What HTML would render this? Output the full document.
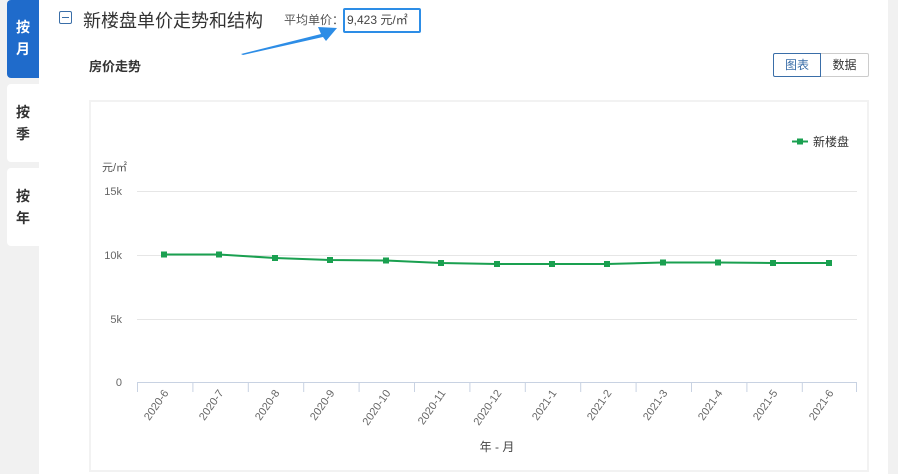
<!DOCTYPE html>
<html><head><meta charset="utf-8"><style>
body{margin:0;width:898px;height:474px;background:#f1f1f1;font-family:"Liberation Sans","Noto Sans CJK SC",sans-serif;position:relative;overflow:hidden}
.main{position:absolute;left:39px;top:0;width:849px;height:474px;background:#fff}
.tab{position:absolute;left:7px;width:32px;background:#fff;border-radius:4px 0 0 4px;font-size:14px;font-weight:bold;color:#333;text-align:center;line-height:22px}
.t{position:absolute;white-space:nowrap}
</style></head><body>
<div class="main"></div>
<div class="tab" style="top:0;height:78px;background:#1f6bcb;color:#fff;padding-top:16px;box-sizing:border-box">按<br>月</div>
<div class="tab" style="top:84px;height:78px;padding-top:17px;box-sizing:border-box">按<br>季</div>
<div class="tab" style="top:168px;height:78px;padding-top:17px;box-sizing:border-box">按<br>年</div>
<div style="position:absolute;left:59px;top:11px;width:13px;height:13px;border:1.5px solid #3a6ea8;border-radius:2px;box-sizing:border-box"><div style="position:absolute;left:2px;right:2px;top:4.5px;height:1.5px;background:#3a6ea8"></div></div>
<div class="t" style="left:83px;top:7px;font-size:18px;color:#333">新楼盘单价走势和结构</div>
<div class="t" style="left:284px;top:11px;font-size:12px;color:#555">平均单价：</div>
<div style="position:absolute;left:343px;top:8px;width:78px;height:25px;border:2px solid #2d8de6;border-radius:2px;box-sizing:border-box"></div>
<div class="t" style="left:347px;top:11px;font-size:12px;color:#444">9,423 元/㎡</div>
<svg style="position:absolute;left:0;top:0" width="898" height="474">
<polygon points="241,54 321,34 318,27 337,28 326,41 323,37 243,55" fill="#2d8de6"/>
</svg>
<div class="t" style="left:89px;top:56px;font-size:13px;font-weight:bold;color:#333">房价走势</div>
<div style="position:absolute;left:773px;top:53px;width:48px;height:24px;border:1px solid #3a6ea8;border-radius:2px 0 0 2px;box-sizing:border-box;font-size:12px;color:#3a6ea8;text-align:center;line-height:22px">图表</div>
<div style="position:absolute;left:821px;top:53px;width:48px;height:24px;border:1px solid #ccc;border-left:0;border-radius:0 2px 2px 0;box-sizing:border-box;font-size:12px;color:#333;text-align:center;line-height:22px">数据</div>
<div style="position:absolute;left:89px;top:100px;width:780px;height:372px;border:2px solid #f2f2f2;box-sizing:border-box"></div>
<svg style="position:absolute;left:0;top:0" width="898" height="474" font-family="Liberation Sans,Noto Sans CJK SC,sans-serif">
<g stroke="#e6e6e6"><line x1="137" x2="857" y1="191.5" y2="191.5"/><line x1="137" x2="857" y1="255.5" y2="255.5"/><line x1="137" x2="857" y1="319.5" y2="319.5"/></g>
<line x1="137" x2="857" y1="382.5" y2="382.5" stroke="#c8d2e2"/>
<g stroke="#c8d2e2">
<line x1="137.5" x2="137.5" y1="382" y2="392"/><line x1="192.9" x2="192.9" y1="382" y2="392"/><line x1="248.3" x2="248.3" y1="382" y2="392"/><line x1="303.7" x2="303.7" y1="382" y2="392"/><line x1="359.1" x2="359.1" y1="382" y2="392"/><line x1="414.5" x2="414.5" y1="382" y2="392"/><line x1="469.9" x2="469.9" y1="382" y2="392"/><line x1="525.3" x2="525.3" y1="382" y2="392"/><line x1="580.7" x2="580.7" y1="382" y2="392"/><line x1="636.1" x2="636.1" y1="382" y2="392"/><line x1="691.5" x2="691.5" y1="382" y2="392"/><line x1="746.9" x2="746.9" y1="382" y2="392"/><line x1="802.3" x2="802.3" y1="382" y2="392"/><line x1="856.5" x2="856.5" y1="382" y2="392"/>
</g>
<g font-size="11" fill="#666" text-anchor="end">
<text x="122" y="195">15k</text><text x="122" y="259">10k</text><text x="122" y="323">5k</text><text x="122" y="386">0</text>
</g>
<text x="102" y="171" font-size="11" fill="#555">元/㎡</text>
<polyline fill="none" stroke="#1aa050" stroke-width="2" points="164,254.5 219,254.5 275,258 330,260 386,260.5 441,263 497,264 552,264 607,264 663,262.5 718,262.5 773,263 829,263"/>
<g fill="#1aa050">
<rect x="161" y="251.5" width="6" height="6"/><rect x="216" y="251.5" width="6" height="6"/><rect x="272" y="255" width="6" height="6"/><rect x="327" y="257" width="6" height="6"/><rect x="383" y="257.5" width="6" height="6"/><rect x="438" y="260" width="6" height="6"/><rect x="494" y="261" width="6" height="6"/><rect x="549" y="261" width="6" height="6"/><rect x="604" y="261" width="6" height="6"/><rect x="660" y="259.5" width="6" height="6"/><rect x="715" y="259.5" width="6" height="6"/><rect x="770" y="260" width="6" height="6"/><rect x="826" y="260" width="6" height="6"/>
</g>
<line x1="792" x2="808" y1="141.5" y2="141.5" stroke="#1aa050" stroke-width="2"/><rect x="797" y="138.5" width="6" height="6" fill="#1aa050"/>
<text x="813" y="146" font-size="12" fill="#333">新楼盘</text>
<g font-size="11" fill="#666" text-anchor="end">
<text transform="translate(169,393) rotate(-55)">2020-6</text>
<text transform="translate(224,393) rotate(-55)">2020-7</text>
<text transform="translate(280,393) rotate(-55)">2020-8</text>
<text transform="translate(335,393) rotate(-55)">2020-9</text>
<text transform="translate(391,393) rotate(-55)">2020-10</text>
<text transform="translate(446,393) rotate(-55)">2020-11</text>
<text transform="translate(502,393) rotate(-55)">2020-12</text>
<text transform="translate(557,393) rotate(-55)">2021-1</text>
<text transform="translate(612,393) rotate(-55)">2021-2</text>
<text transform="translate(668,393) rotate(-55)">2021-3</text>
<text transform="translate(723,393) rotate(-55)">2021-4</text>
<text transform="translate(778,393) rotate(-55)">2021-5</text>
<text transform="translate(834,393) rotate(-55)">2021-6</text>
</g>
<text x="497" y="451" font-size="12" fill="#444" text-anchor="middle">年 - 月</text>
</svg>
</body></html>
